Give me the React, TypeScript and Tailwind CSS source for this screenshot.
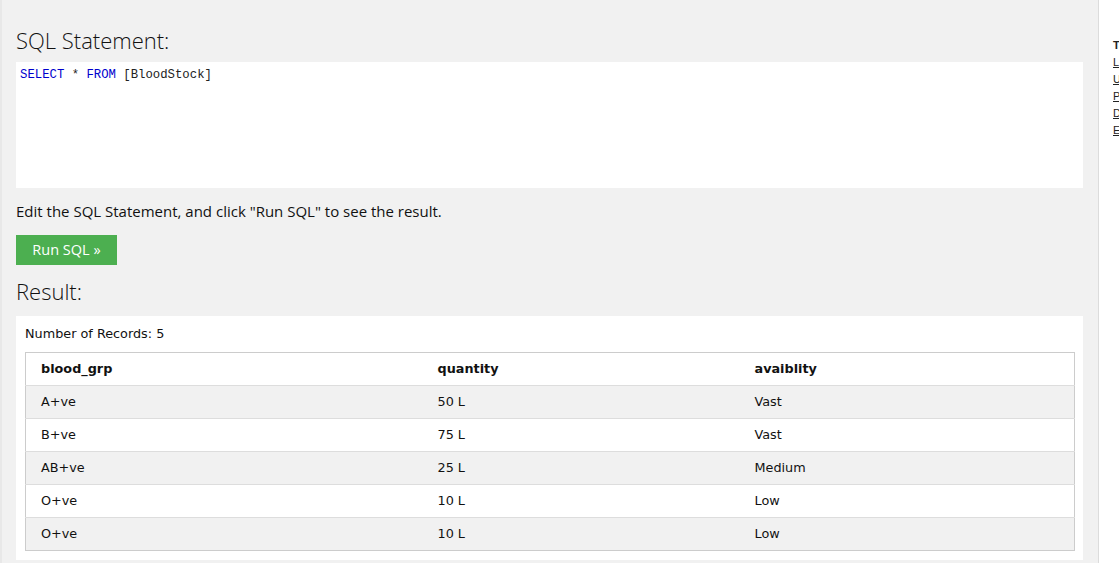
const rows = [
  { grp: "A+ve", qty: "50 L", avail: "Vast" },
  { grp: "B+ve", qty: "75 L", avail: "Vast" },
  { grp: "AB+ve", qty: "25 L", avail: "Medium" },
  { grp: "O+ve", qty: "10 L", avail: "Low" },
  { grp: "O+ve", qty: "10 L", avail: "Low" },
];

const sideLinks = ["Learn SQL", "Use Cases", "Practice", "Data Types", "Examples"];

const App = () => {
  return (
    <div className="flex h-[563px] w-[1119px] overflow-hidden bg-white font-['DejaVu_Sans',sans-serif] text-black">
      {/* Left: editor + result */}
      <div className="w-[1099px] shrink-0 border-l-2 border-r border-l-[#e8e8e8] border-r-[#dcdcdc] bg-[#f1f1f1] pl-[14px] pr-[15px] pt-[25px]">
        <h2 className="font-['Open_Sans',sans-serif] text-[22px] font-light leading-[30px] text-[#111]">
          SQL Statement:
        </h2>
        <div className="mt-[7px] h-[126px] bg-white px-[4px] py-[5px] font-['Liberation_Mono',monospace] text-[12.3px] leading-[16px]">
          <span className="text-[#0000cd]">SELECT</span>
          <span className="text-[#222]"> * </span>
          <span className="text-[#0000cd]">FROM</span>
          <span className="text-[#222]"> [BloodStock]</span>
        </div>
        <p className="mt-[13px] font-['Open_Sans',sans-serif] text-[15px] leading-[20px] text-[#111]">
          Edit the SQL Statement, and click "Run SQL" to see the result.
        </p>
        <button className="mt-[14px] h-[30px] w-[101px] bg-[#4caf50] font-['Open_Sans',sans-serif] text-[14.5px] text-white">
          Run SQL »
        </button>
        <h2 className="mt-[11px] font-['Open_Sans',sans-serif] text-[22px] font-light leading-[30px] text-[#111]">
          Result:
        </h2>
        <div className="mt-[10px] h-[244px] bg-white px-[9px] pt-[9px]">
          <div className="h-[18px] text-[12.8px] leading-[18px] text-[#111]">
            Number of Records: 5
          </div>
          <table className="mt-[9px] w-[1050px] border-collapse border border-[#cccccc] text-[12.8px] text-[#111]">
            <colgroup>
              <col className="w-[397px]" />
              <col className="w-[317px]" />
              <col />
            </colgroup>
            <thead>
              <tr className="h-[33px] bg-white">
                <th className="pl-[15px] text-left font-bold">blood_grp</th>
                <th className="pl-[15px] text-left font-bold">quantity</th>
                <th className="pl-[15px] text-left font-bold">avaiblity</th>
              </tr>
            </thead>
            <tbody>
              {rows.map((row, index) => (
                <tr
                  key={index}
                  className={`h-[33px] border-t border-[#dddddd] ${index % 2 === 0 ? "bg-[#f1f1f1]" : "bg-white"}`}
                >
                  <td className="pl-[15px]">{row.grp}</td>
                  <td className="pl-[15px]">{row.qty}</td>
                  <td className="pl-[15px]">{row.avail}</td>
                </tr>
              ))}
            </tbody>
          </table>
        </div>
      </div>

      {/* Right: sidebar, mostly off-screen */}
      <div className="min-w-0 flex-1 overflow-hidden pl-[14px] pt-[37px] font-['Liberation_Sans',sans-serif] text-[11px] leading-[17px] text-[#222]">
        <div className="whitespace-nowrap font-bold">Tables</div>
        {sideLinks.map((link) => (
          <div key={link} className="whitespace-nowrap underline">
            {link}
          </div>
        ))}
      </div>
    </div>
  );
};

export default App;
